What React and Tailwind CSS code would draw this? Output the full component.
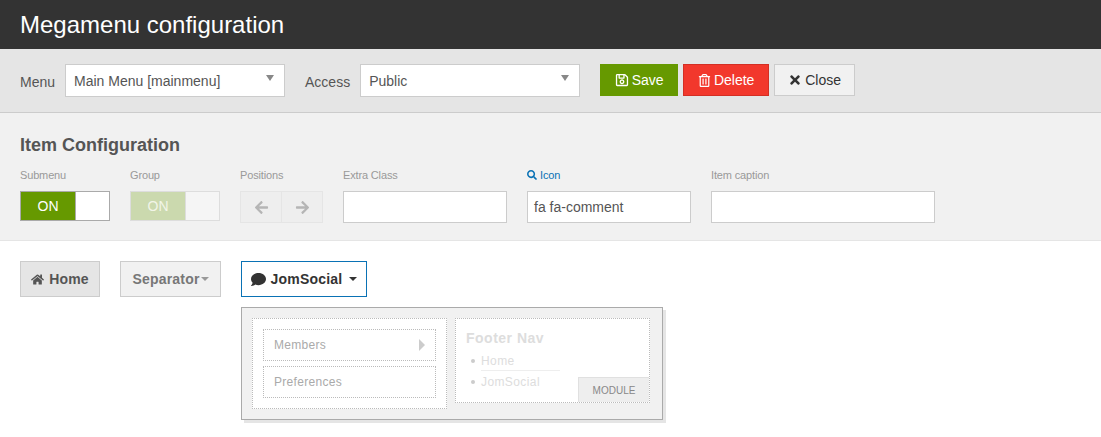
import React from 'react';
import {
  FaRegSave,
  FaRegTrashAlt,
  FaTimes,
  FaSearch,
  FaArrowLeft,
  FaArrowRight,
  FaHome,
  FaComment,
} from 'react-icons/fa';

// Fake select, the native arrow doesn't match the screenshot
const SelectBox = ({ value }) => (
  <div className="relative w-[220px] h-[33px] bg-white border border-[#ccc] pl-[8px] leading-[33px] text-[14px] text-[#555]">
    {value}
    <span className="absolute right-[10px] top-[10px] w-0 h-0 border-x-[4px] border-x-transparent border-t-[6px] border-t-[#888]" />
  </div>
);

const Toggle = ({ faded }) => (
  <div
    className={`flex w-[90px] h-[30px] border ${
      faded ? 'border-[#ddd]' : 'border-[#aaa]'
    }`}
  >
    <div
      className={`w-[54px] text-center text-[14px] leading-[28px] ${
        faded ? 'bg-[#cbd9ae] text-[#f2f5e8]' : 'bg-[#669900] text-white'
      }`}
    >
      ON
    </div>
    <div className={`flex-1 border-l ${faded ? 'bg-[#f5f5f5] border-[#ddd]' : 'bg-white border-[#aaa]'}`} />
  </div>
);

const FieldLabel = ({ children }) => (
  <div className="h-[12px] mb-[10px] text-[11px] leading-[12px] tracking-[-0.15px] text-[#999]">{children}</div>
);

const TextField = ({ width, value }) => (
  <div
    className={`${width} h-[32px] bg-white border border-[#ccc] px-[6px] leading-[30px] text-[14px] text-[#555]`}
  >
    {value}
  </div>
);

const MenuItem = ({ label, arrow }) => (
  <div className="relative h-[32px] bg-white border border-dotted border-[#bbb] pl-[10px] leading-[30px] text-[12px] tracking-[0.3px] text-[#aaa]">
    {label}
    {arrow && (
      <span className="absolute right-[10px] top-[9px] w-0 h-0 border-y-[6px] border-y-transparent border-l-[6px] border-l-[#ccc]" />
    )}
  </div>
);

export default function App() {
  return (
    <div className="w-[1101px] h-[437px] overflow-hidden bg-white font-['Liberation_Sans',Arial,sans-serif]">
      {/* header */}
      <div className="h-[49px] bg-[#333] pl-[20px] text-[24px] leading-[49px] text-white">
        Megamenu configuration
      </div>

      {/* toolbar */}
      <div className="flex h-[64px] pl-[20px] pt-[15px] bg-[#e5e5e5] border-b border-[#ccc]">
        <span className="mr-[10px] text-[14px] leading-[36px] text-[#555]">Menu</span>
        <SelectBox value="Main Menu [mainmenu]" />
        <span className="ml-[20px] mr-[10px] text-[14px] leading-[36px] text-[#555]">Access</span>
        <SelectBox value="Public" />
        <button className="flex items-center justify-center gap-[3px] w-[78px] h-[32px] ml-[20px] bg-[#669900] text-[14px] text-white">
          <FaRegSave size={14} /> Save
        </button>
        <button className="flex items-center justify-center gap-[3px] w-[86px] h-[32px] ml-[5px] bg-[#f2382c] border border-[#d32f24] text-[14px] text-white">
          <FaRegTrashAlt size={13} /> Delete
        </button>
        <button className="flex items-center justify-center gap-[3px] w-[81px] h-[32px] ml-[5px] bg-[#f1f1f1] border border-[#ccc] text-[14px] text-[#333]">
          <FaTimes size={14} /> Close
        </button>
      </div>

      {/* item configuration */}
      <div className="h-[128px] pl-[20px] pt-[22px] bg-[#f1f1f1] border-b border-[#e5e5e5]">
        <div className="h-[21px] text-[18px] font-bold leading-[21px] text-[#555]">Item Configuration</div>
        <div className="flex mt-[13px]">
          <div className="w-[110px]">
            <FieldLabel>Submenu</FieldLabel>
            <Toggle />
          </div>
          <div className="w-[110px]">
            <FieldLabel>Group</FieldLabel>
            <Toggle faded />
          </div>
          <div className="w-[103px]">
            <FieldLabel>Positions</FieldLabel>
            <div className="flex w-[83px] h-[32px] bg-[#eee] border border-[#e5e5e5] text-[#b5b5b5]">
              <div className="flex flex-1 items-center justify-center border-r border-[#e5e5e5]">
                <FaArrowLeft size={15} />
              </div>
              <div className="flex flex-1 items-center justify-center">
                <FaArrowRight size={15} />
              </div>
            </div>
          </div>
          <div className="w-[184px]">
            <FieldLabel>Extra Class</FieldLabel>
            <TextField width="w-[164px]" />
          </div>
          <div className="w-[184px]">
            <div className="flex items-center gap-[3px] h-[12px] mb-[10px] text-[11px] leading-[12px] tracking-[-0.15px] text-[#0a72b5]">
              <FaSearch size={10} /> Icon
            </div>
            <TextField width="w-[164px]" value="fa fa-comment" />
          </div>
          <div>
            <FieldLabel>Item caption</FieldLabel>
            <TextField width="w-[224px]" />
          </div>
        </div>
      </div>

      {/* menu preview */}
      <div className="pl-[20px] pt-[20px]">
        <div className="flex items-start text-[14px] font-bold tracking-[0.2px]">
          <div className="flex items-center justify-center gap-[5px] w-[80px] h-[36px] bg-[#e5e5e5] border border-[#ccc] text-[#555]">
            <FaHome size={13} /> Home
          </div>
          <div className="flex items-center justify-center gap-[1px] w-[101px] h-[36px] ml-[20px] bg-[#f1f1f1] border border-[#ccc] text-[#777]">
            Separator
            <span className="w-0 h-0 border-x-[4px] border-x-transparent border-t-[4px] border-t-[#999]" />
          </div>
          <div className="flex items-center justify-center gap-[5px] w-[126px] h-[36px] ml-[20px] bg-white border border-[#0a72b5] text-[#333]">
            <FaComment size={15} /> JomSocial
            <span className="ml-[2px] w-0 h-0 border-x-[4px] border-x-transparent border-t-[4px] border-t-[#333]" />
          </div>
        </div>

        <div className="flex items-start gap-[8px] w-[422px] h-[113px] ml-[221px] mt-[10px] p-[10px] bg-[#f1f1f1] border border-[#aaa] shadow-[3px_3px_0_#e5e5e5]">
          <div className="flex flex-col gap-[5px] w-[195px] h-[91px] p-[10px] bg-white border border-dotted border-[#bbb]">
            <MenuItem label="Members" arrow />
            <MenuItem label="Preferences" />
          </div>
          <div className="relative w-[195px] h-[85px] pl-[10px] pt-[11px] bg-white border border-dotted border-[#bbb]">
            <div className="text-[14px] font-bold leading-[16px] tracking-[0.5px] text-[#ddd]">Footer Nav</div>
            <ul className="mt-[5px] ml-[15px] w-[79px] text-[12px] tracking-[0.4px] text-[#ddd]">
              <li className="relative h-[20px] leading-[20px] border-b border-[#eee] before:absolute before:left-[-10px] before:top-[8px] before:w-[4px] before:h-[4px] before:rounded-full before:bg-[#ccc]">
                Home
              </li>
              <li className="relative mt-[1px] leading-[20px] before:absolute before:left-[-10px] before:top-[8px] before:w-[4px] before:h-[4px] before:rounded-full before:bg-[#ccc]">
                JomSocial
              </li>
            </ul>
            <div className="absolute right-0 bottom-0 w-[71px] h-[25px] bg-[#eee] border-t border-l border-[#e0e0e0] text-center text-[10px] leading-[25px] text-[#888]">
              MODULE
            </div>
          </div>
        </div>
      </div>
    </div>
  );
}
